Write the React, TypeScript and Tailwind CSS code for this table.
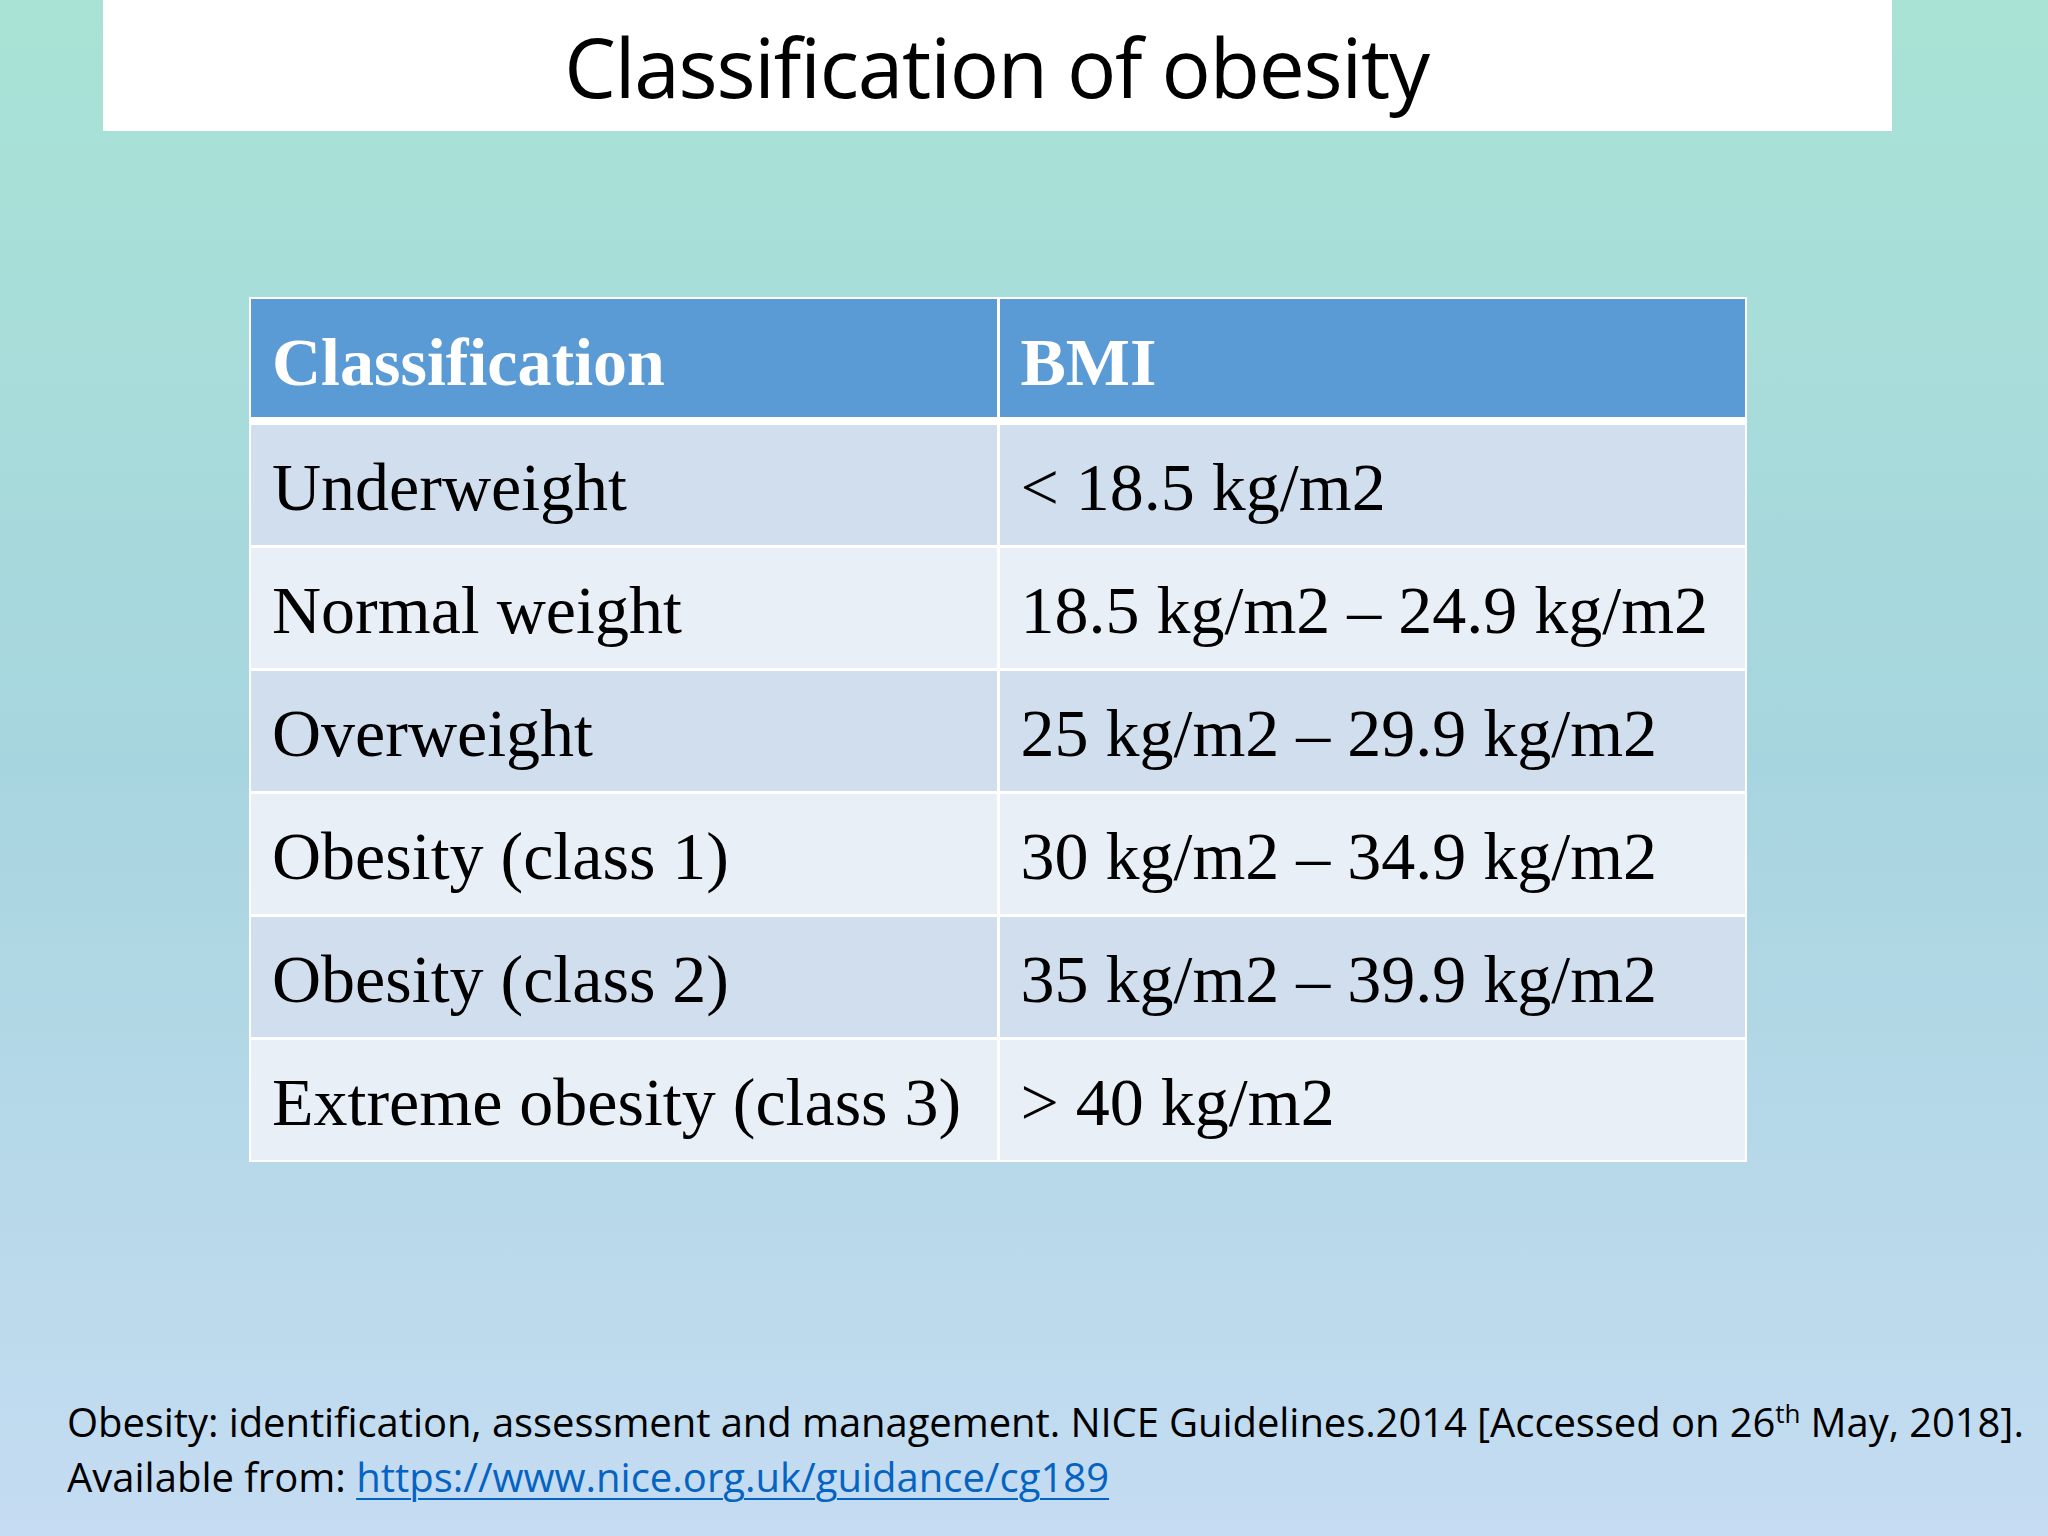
import React from "react";

const rows: [string, string][] = [
  ["Underweight", "< 18.5 kg/m2"],
  ["Normal weight", "18.5 kg/m2 – 24.9 kg/m2"],
  ["Overweight", "25 kg/m2 – 29.9 kg/m2"],
  ["Obesity (class 1)", "30 kg/m2 – 34.9 kg/m2"],
  ["Obesity (class 2)", "35 kg/m2 – 39.9 kg/m2"],
  ["Extreme obesity (class 3)", "> 40 kg/m2"],
];

export default function App() {
  return (
    <div className="w-[2048px] h-[1536px] flex flex-col bg-gradient-to-b from-[#a8e3d5] via-[#a7d5df] to-[#c5dcf2] overflow-hidden">
      <div className="ml-[103px] w-[1789px] h-[131px] bg-white flex items-center justify-center">
        <h1 className="font-['Open_Sans',sans-serif] text-[82px] leading-none tracking-[-1.2px] text-black font-normal pr-[2px]">
          Classification of obesity
        </h1>
      </div>

      <div className="ml-[249px] mt-[166px] w-[1498px] bg-white p-[2px] font-['Liberation_Serif',serif] text-[68px] leading-none">
        <div className="grid grid-cols-2 gap-x-[3px]">
          <div className="h-[118px] bg-[#5b9bd5] flex items-center pl-[21px] pt-[8px] text-white font-bold">
            Classification
          </div>
          <div className="h-[118px] bg-[#5b9bd5] flex items-center pl-[21px] pt-[8px] text-white font-bold">
            BMI
          </div>
        </div>
        <div className="mt-[8px] grid grid-cols-2 gap-x-[3px] gap-y-[3px]">
          {rows.map(([a, b], i) => {
            const bg = i % 2 === 0 ? "bg-[#d0deee]" : "bg-[#e9eff7]";
            return (
              <React.Fragment key={i}>
                <div className={`h-[120px] ${bg} flex items-center pl-[21px] pt-[3px] text-black whitespace-nowrap`}>{a}</div>
                <div className={`h-[120px] ${bg} flex items-center pl-[21px] pt-[3px] text-black whitespace-nowrap`}>{b}</div>
              </React.Fragment>
            );
          })}
        </div>
      </div>

      <div className="mt-auto mb-[32px] ml-[67px] font-['Open_Sans',sans-serif] text-[40px] leading-[55px] text-black">
        <div className="whitespace-nowrap tracking-[-0.08px]">
          Obesity: identification, assessment and management. NICE Guidelines.2014 [Accessed on 26
          <span className="text-[26px] leading-none relative top-[-14px]">th</span> May, 2018].
        </div>
        <div className="whitespace-nowrap">
          Available from:{" "}
          <a className="text-[#0563c1] underline decoration-[2px] underline-offset-[6px]" href="#">
            https://www.nice.org.uk/guidance/cg189
          </a>
        </div>
      </div>
    </div>
  );
}
